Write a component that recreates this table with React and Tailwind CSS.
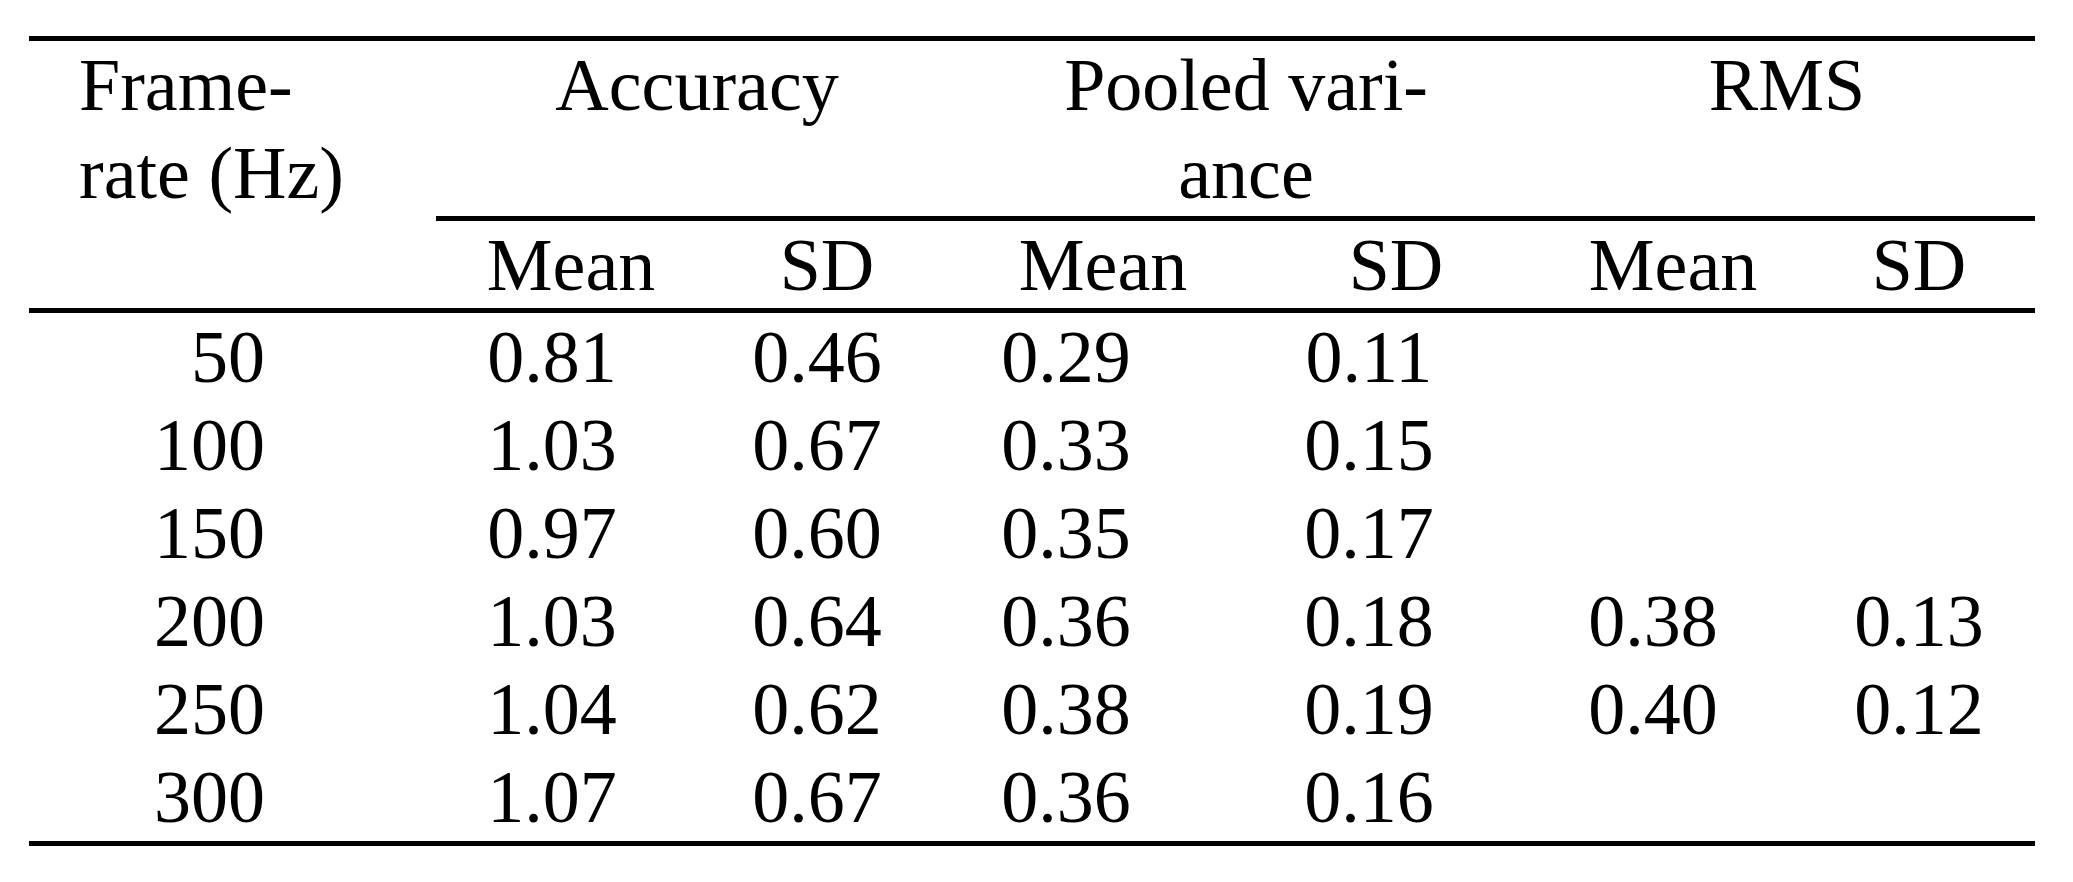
import React from "react";

const rows = [
  ["50", "0.81", "0.46", "0.29", "0.11", "", ""],
  ["100", "1.03", "0.67", "0.33", "0.15", "", ""],
  ["150", "0.97", "0.60", "0.35", "0.17", "", ""],
  ["200", "1.03", "0.64", "0.36", "0.18", "0.38", "0.13"],
  ["250", "1.04", "0.62", "0.38", "0.19", "0.40", "0.12"],
  ["300", "1.07", "0.67", "0.36", "0.16", "", ""],
];

const numCls = [
  "text-right pr-[171px]",
  "text-center pr-[32px]",
  "text-center pr-[24px]",
  "text-center pr-[72px]",
  "text-center pr-[42px]",
  "text-center pr-[28px]",
  "text-center pl-[3px]",
];

export default function App() {
  return (
    <div className="w-[2073px] h-[882px] bg-white text-black font-['Liberation_Serif',serif] text-[74px] whitespace-nowrap pt-[36px] pl-[29px]">
      <div className="w-[2006px] border-y-[5px] border-black grid grid-cols-[407px_264px_258px_288px_288px_266px_235px]">
        <div className="row-span-2 border-b-[5px] border-black pl-[50px] leading-[88px]">
          Frame-
          <br />
          rate (Hz)
        </div>
        <div className="col-span-2 h-[180px] border-b-[5px] border-black text-center leading-[88px]">
          Accuracy
        </div>
        <div className="col-span-2 h-[180px] border-b-[5px] border-black text-center leading-[88px]">
          Pooled vari-
          <br />
          ance
        </div>
        <div className="col-span-2 h-[180px] border-b-[5px] border-black text-center pl-[5px] leading-[88px]">
          RMS
        </div>

        <div className="h-[92px] border-b-[5px] border-black text-center pl-[6px] leading-[88px]">Mean</div>
        <div className="h-[92px] border-b-[5px] border-black text-center pr-[4px] leading-[88px]">SD</div>
        <div className="h-[92px] border-b-[5px] border-black text-center pl-[2px] leading-[88px]">Mean</div>
        <div className="h-[92px] border-b-[5px] border-black text-center pl-[12px] leading-[88px]">SD</div>
        <div className="h-[92px] border-b-[5px] border-black text-center pl-[12px] leading-[88px]">Mean</div>
        <div className="h-[92px] border-b-[5px] border-black text-center pl-[3px] leading-[88px]">SD</div>

        {rows.map((r, i) =>
          r.map((v, j) => (
            <div key={i + "-" + j} className={"h-[88px] leading-[88px] " + numCls[j]}>
              {v}
            </div>
          ))
        )}
      </div>
    </div>
  );
}
